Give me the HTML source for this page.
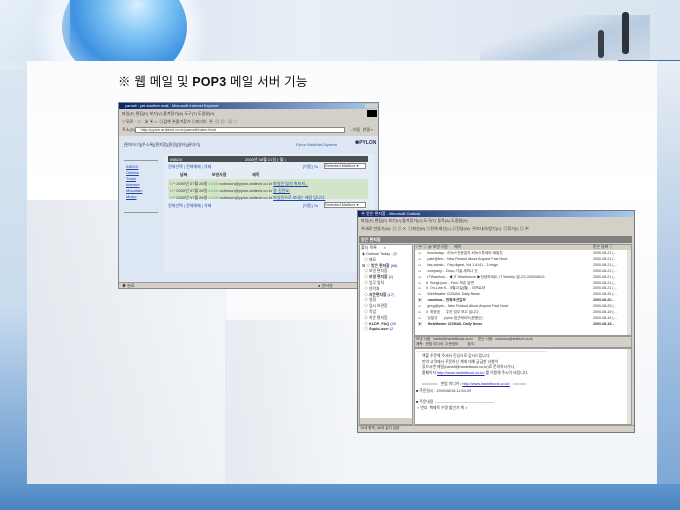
<!DOCTYPE html>
<html><head><meta charset="utf-8">
<style>
*{margin:0;padding:0;box-sizing:border-box}
body{width:680px;height:510px;overflow:hidden;position:relative;background:#5a8fc8;font-family:"Liberation Sans","Noto Sans CJK KR",sans-serif}
.a{position:absolute}
.t{font-size:4px;color:#333;white-space:nowrap;line-height:5px}
.k{font-family:"Liberation Sans","Noto Sans CJK KR",sans-serif}
</style></head><body>
<div class="a" style="left:0;top:0;width:680px;height:510px;background:linear-gradient(180deg,#e6eef6 0%,#dbe6f1 11%,#c9dcee 60%,#6f9fd2 92%,#4a84c2 100%)"></div>
<div class="a" style="left:0;top:0;width:680px;height:62px;background:linear-gradient(90deg,#cfe0f0,#e9eff6 45%,#dfe8f2 80%,#d8e4ef)"></div>
<!-- globe -->
<div class="a" style="left:25px;top:-45px;width:190px;height:150px;border-radius:50%;background:radial-gradient(circle,#f4f8fc 55%,rgba(230,238,246,0) 72%)"></div>
<div class="a" style="left:62px;top:-28px;width:125px;height:110px;border-radius:50%;background:radial-gradient(circle at 60% 30%,#d8efff 0%,#7cc2f4 30%,#3d91e0 60%,#cfe4f6 100%)"></div>
<div class="a" style="left:0;top:0;width:70px;height:70px;background:linear-gradient(135deg,#e9f1f8,transparent)"></div>
<div class="a" style="left:480px;top:15px;width:170px;height:45px;background:linear-gradient(160deg,transparent 30%,#b9cbe0 60%,#cfdbe8 100%)"></div>
<div class="a" style="left:618px;top:60px;width:62px;height:5px;background:#3a6fb8"></div>
<div class="a" style="left:598px;top:30px;width:6px;height:28px;background:#3b3f48;border-radius:3px"></div>
<div class="a" style="left:622px;top:12px;width:7px;height:42px;background:#2c313a;border-radius:3px"></div>
<!-- white panel -->
<div class="a" style="left:27px;top:61px;width:630px;height:423px;background:linear-gradient(180deg,#fafbfd,#ffffff 30%,#f1f4f8 100%)"></div>
<div class="a" style="left:27px;top:200px;width:200px;height:284px;background:linear-gradient(90deg,#d6dde6,#eef2f6);opacity:.6"></div>
<div class="a" style="left:225px;top:320px;width:130px;height:164px;background:linear-gradient(90deg,#e0e6ed,#f3f5f8);opacity:.7"></div>
<div class="a" style="left:657px;top:61px;width:23px;height:423px;background:linear-gradient(180deg,#e8eef5,#7ea8d6)"></div>
<div class="a k" style="left:118px;top:71px;font-size:12.5px;color:#111;letter-spacing:.2px">※ 웹 메일 및 <b>POP3</b> 메일 서버 기능</div>

<!-- IE window -->
<div class="a" style="left:118px;top:102px;width:261px;height:187px;background:#d4d0c8;border:1px solid #888"></div>
<div class="a" style="left:119px;top:103px;width:259px;height:6px;background:linear-gradient(90deg,#0a246a,#a6caf0)"></div>
<div class="a t" style="left:125px;top:103px;color:#fff;font-size:4px">yamail : yet another mail - Microsoft Internet Explorer</div>
<div class="a" style="left:365px;top:104px;width:12px;height:4px;background:#d4d0c8"></div>
<div class="a t k" style="left:122px;top:111px">파일(F) 편집(E) 보기(V) 즐겨찾기(A) 도구(T) 도움말(H)</div>
<div class="a" style="left:367px;top:110px;width:10px;height:7px;background:#000"></div>
<div class="a t k" style="left:122px;top:119px">⇦뒤로 · ⇨ · ⊗ ▣ ⌂ &nbsp;◎검색 ▣즐겨찾기 ◎미디어 &nbsp;▣· ▤ ◎ · ▤ ◇</div>
<div class="a" style="left:135px;top:127px;width:210px;height:6px;background:#fff;border:1px solid #888"></div>
<div class="a t" style="left:122px;top:127px">주소(D) &nbsp;&nbsp;&nbsp; http://pylon.anltech.co.kr/yamail/index.html</div>
<div class="a t k" style="left:349px;top:127px">→이동 &nbsp;연결 »</div>
<div class="a" style="left:119px;top:136px;width:259px;height:146px;background:#dde7f4"></div>
<div class="a t k" style="left:124px;top:142px;color:#335">[편지쓰기][주소록][편지함][환경][필터][끝내기]</div>
<div class="a t" style="left:296px;top:142px;color:#4060a0">Pylon WebMail System</div>
<div class="a" style="left:355px;top:140px;width:18px;height:7px;color:#335;font-size:5px;font-weight:bold">✺PYLON</div>
<div class="a" style="left:164px;top:154px;width:210px;height:118px;background:#e4ecf6"></div>
<div class="a" style="left:124px;top:160px;width:34px;height:1px;background:#999"></div>
<div class="a" style="left:124px;top:212px;width:34px;height:1px;background:#999"></div>
<div class="a t" style="left:126px;top:164px;color:#2244aa;line-height:6px;text-decoration:underline">INBOX<br>Outbox<br>Trash<br>Internet<br>Mountain<br>Music</div>
<div class="a" style="left:168px;top:156px;width:200px;height:6px;background:#4a4f54"></div>
<div class="a t" style="left:170px;top:157px;color:#fff">INBOX</div>
<div class="a t k" style="left:245px;top:157px;color:#fff">2000년 08월 21일 ( 월 )</div>
<div class="a t k" style="left:168px;top:164px;color:#2244aa">전체선택 | 전체해제 | 삭제</div>
<div class="a t k" style="left:303px;top:164px;color:#2244aa">[이동] To</div>
<div class="a" style="left:324px;top:163px;width:42px;height:6px;background:#fff;border:1px solid #888"></div>
<div class="a t" style="left:325px;top:163px">Selected Mailbox ▾</div>
<div class="a t k" style="left:180px;top:172px;font-weight:bold">날짜 &nbsp;&nbsp;&nbsp;&nbsp;&nbsp;&nbsp;&nbsp;&nbsp;&nbsp;&nbsp;&nbsp;&nbsp;&nbsp;&nbsp;&nbsp;&nbsp;&nbsp;&nbsp;&nbsp;&nbsp;&nbsp;보낸사람 &nbsp;&nbsp;&nbsp;&nbsp;&nbsp;&nbsp;&nbsp;&nbsp;&nbsp;&nbsp;&nbsp;&nbsp;&nbsp;&nbsp;&nbsp;&nbsp;&nbsp;&nbsp;&nbsp;&nbsp;&nbsp;&nbsp;제목</div>
<div class="a" style="left:168px;top:179px;width:200px;height:20px;background:#d3e4c8"></div>
<div class="a t k" style="left:170px;top:180px;line-height:7px">□ * 2000년 07월 28일 <span style="color:#5a5">14:26</span> colmoon@pylon.anltech.co.kr <u style="color:#2244aa">파일린 잃지 축보셔...</u><br>□ * 2000년 07월 28일 <span style="color:#5a5">14:26</span> colmoon@pylon.anltech.co.kr <u style="color:#2244aa">잘 진전요.</u><br>□ * 2000년 07월 28일 <span style="color:#5a5">14:26</span> colmoon@pylon.anltech.co.kr <u style="color:#2244aa">파일린으로 보내는 메일 입니다.</u></div>
<div class="a t k" style="left:168px;top:203px;color:#2244aa">전체선택 | 전체해제 | 삭제</div>
<div class="a t k" style="left:303px;top:203px;color:#2244aa">[이동] To</div>
<div class="a" style="left:324px;top:202px;width:42px;height:6px;background:#fff;border:1px solid #888"></div>
<div class="a t" style="left:325px;top:202px">Selected Mailbox ▾</div>
<div class="a" style="left:119px;top:282px;width:259px;height:6px;background:#d4d0c8;border-top:1px solid #999"></div>
<div class="a t k" style="left:122px;top:283px">◉ 완료</div>
<div class="a t k" style="left:318px;top:283px">● 인터넷</div>

<!-- Outlook window -->
<div class="a" style="left:357px;top:210px;width:278px;height:223px;background:#d4d0c8;border:1px solid #777"></div>
<div class="a" style="left:358px;top:211px;width:276px;height:6px;background:linear-gradient(90deg,#0a246a,#a6caf0)"></div>
<div class="a t k" style="left:361px;top:211px;color:#fff">▣ 받은 편지함 - Microsoft Outlook</div>
<div class="a t k" style="left:361px;top:218px">파일(F) 편집(E) 보기(V) 즐겨찾기(O) 도구(T) 동작(A) 도움말(H)</div>
<div class="a t k" style="left:361px;top:226px">▣새로 만들기(N)· ▤ ▤ ✕ &nbsp;◎회신(R) ◎전체 회신(L) ◎전달(W) &nbsp;▣보내기/받기(C) &nbsp;◎찾기(I) ▤ ▣</div>
<div class="a" style="left:359px;top:236px;width:273px;height:7px;background:#808080"></div>
<div class="a t k" style="left:361px;top:237px;color:#fff;font-weight:bold">받은 편지함</div>
<div class="a" style="left:359px;top:244px;width:54px;height:181px;background:#fff;border:1px solid #999"></div>
<div class="a t k" style="left:361px;top:245px">폴더 목록 &nbsp;&nbsp;&nbsp;&nbsp;&nbsp;×</div>
<div class="a t k" style="left:362px;top:252px;line-height:5.8px;font-size:3.8px">◈ Outlook Today - [3<br>&nbsp; ◇ 메모<br>⊞ ◇ <b>받은 편지함</b> <span style="color:#22a">(68)</span><br>&nbsp; ◇ 보낸 편지함<br>&nbsp; ◇ <b>보낼 편지함</b> <span style="color:#22a">(1)</span><br>&nbsp; ◇ 업무 일지<br>&nbsp; ◇ 연락처<br>&nbsp; ◇ <b>지운편지함</b> <span style="color:#22a">(17)</span><br>&nbsp; ◇ 일정<br>&nbsp; ◇ 임시 보관함<br>&nbsp; ◇ 작업<br>&nbsp; ◇ 지운 편지함<br>&nbsp; ◇ <b>KLDP_FAQ</b> <span style="color:#22a">(28</span><br>&nbsp; ◇ <b>Squid-user</b> <span style="color:#22a">(2</span></div>
<div class="a" style="left:360px;top:418px;width:52px;height:6px;background:#d4d0c8"></div>
<div class="a" style="left:414px;top:244px;width:218px;height:92px;background:#fff;border:1px solid #999"></div>
<div class="a" style="left:415px;top:245px;width:216px;height:5px;background:#d4d0c8"></div>
<div class="a t k" style="left:416px;top:245px;font-size:3.8px">! ▣ ▽ @ 보낸 사람 &nbsp;&nbsp;&nbsp;&nbsp;&nbsp;제목</div>
<div class="a t k" style="left:593px;top:245px;font-size:3.8px">받은 날짜 ▽</div>
<div class="a t k" style="left:418px;top:251px;font-size:3.6px;line-height:5.9px">▭ &nbsp;&nbsp;&nbsp;&nbsp;&nbsp;linuxtoday... 리눅스전문잡지-리눅스투데이-메일진<br>▭ &nbsp;&nbsp;&nbsp;&nbsp;&nbsp;pate@fen... New Findout About Anyone Fast Now!<br>▭ &nbsp;&nbsp;&nbsp;&nbsp;&nbsp;faq-admin... Faq digest, Vol 1 #141 - 3 msgs<br>▭ &nbsp;&nbsp;&nbsp;&nbsp;&nbsp;company... Cisco 기술 세미나 건<br>▭ &nbsp;&nbsp;&nbsp;&nbsp;&nbsp;ITWarehou... ◀ IT Warehouse ▶안녕하세요, IT Weekly 입니다.2000/08/21<br>▭ &nbsp;&nbsp;&nbsp;ⅱ SungLyool... Fwd: 보존 답변<br>▭ &nbsp;&nbsp;&nbsp;ⅱ On-Line K... 8월21일(월) - 이프로와<br>▭ &nbsp;&nbsp;&nbsp;&nbsp;&nbsp;WebMaster CIZMAIL Daily News<br><b>▣ &nbsp;&nbsp;&nbsp;&nbsp;&nbsp;manhwa... 만화조선일보</b><br>▭ &nbsp;&nbsp;&nbsp;&nbsp;&nbsp;greg@yes... New Findout About Anyone Fast Now!<br>▭ &nbsp;&nbsp;&nbsp;ⅱ 최명엽 &nbsp;&nbsp;&nbsp;&nbsp;&nbsp;주간 업무 보고 입니다.<br>▭ &nbsp;&nbsp;&nbsp;&nbsp;&nbsp;임일규 &nbsp;&nbsp;&nbsp;&nbsp;&nbsp;&nbsp;pylon 접근레이드(문용순)<br><b>▣ &nbsp;&nbsp;&nbsp;&nbsp;&nbsp;WebMaster CIZMAIL Daily News</b></div>
<div class="a t" style="left:593px;top:251px;font-size:3.6px;line-height:5.9px">2000-08-21 (...<br>2000-08-21 (...<br>2000-08-21 (...<br>2000-08-21 (...<br>2000-08-21 (...<br>2000-08-21 (...<br>2000-08-21 (...<br>2000-08-20 (...<br><b>2000-08-20...</b><br>2000-08-20 (...<br>2000-08-19 (...<br>2000-08-19 (...<br><b>2000-08-19...</b></div>
<div class="a" style="left:627px;top:250px;width:4px;height:85px;background:#e4e2dc"></div>
<div class="a" style="left:414px;top:336px;width:218px;height:12px;background:#d4d0c8;border:1px solid #999"></div>
<div class="a t k" style="left:416px;top:337px;font-size:3.6px">보낸 사람: &nbsp;hanbit@hanbitbook.co.kr &nbsp;&nbsp;&nbsp;&nbsp;받는 사람: &nbsp;colmoon@anltech.co.kr<br>제목: &nbsp;한빛 미디어, 주문정보 &nbsp;&nbsp;&nbsp;&nbsp;&nbsp;&nbsp;&nbsp;&nbsp;참조:</div>
<div class="a" style="left:414px;top:348px;width:218px;height:77px;background:#fff;border:1px solid #999"></div>
<div class="a t" style="left:416px;top:349px;color:#888;font-size:3.6px">--------------------------------------------------------------------------------------------------------------</div>
<div class="a t k" style="left:422px;top:354px;font-size:3.8px;line-height:5.5px">책을 주문해 주셔서 진심으로 감사드립니다.<br>만약 고객께서 주문하신 책에 대해 궁금한 사항이<br>있으시면 메일(hanbit@hanbitbook.co.kr)로 문의하시거나,<br>홈페이지 <u style="color:#22a">http://www.hanbitbook.co.kr/</u> 를 이용해 주시기 바랍니다.<br><br>======= &nbsp;&nbsp;한빛 미디어 / <u style="color:#22a">http://www.hanbitbook.co.kr/</u> &nbsp;&nbsp;======</div>
<div class="a t k" style="left:416px;top:389px;font-size:3.8px">■ 주문일시 : 2000/08/18 11:54:29</div>
<div class="a t k" style="left:416px;top:400px;font-size:3.8px;line-height:5.5px">■ 주문내용 -----------------------------------------------<br>&nbsp;&lt; 번호 &nbsp;책제목 수량 할인가 계 &gt;</div>
<div class="a" style="left:627px;top:349px;width:4px;height:75px;background:#e4e2dc"></div>
<div class="a" style="left:358px;top:425px;width:276px;height:7px;background:#d4d0c8;border-top:1px solid #999"></div>
<div class="a t k" style="left:360px;top:426px;font-size:3.6px">78개 항목, 68개 읽지 않음</div>
</body></html>
